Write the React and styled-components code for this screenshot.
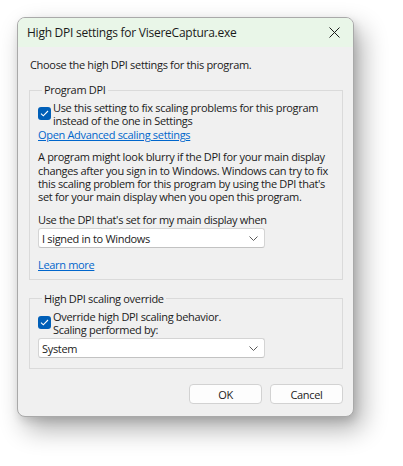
import React from 'react';
import styled, { createGlobalStyle } from 'styled-components';

const Global = createGlobalStyle`
    html, body {
        margin:0;
        padding:0;
        background:#ffffff;
    }
    body{
        font-family: "Open Sans", "Noto Sans", sans-serif;
        font-size:11px;
        letter-spacing:-0.32px;
        color:#1b1b1b;
    }
`

const Page = styled.div`
    width:403px;
    height:466px;
    padding:17px 0 0 17px;
    box-sizing:border-box;
`

const Window = styled.div`
    width:337px;
    height:400px;
    box-sizing:border-box;
    border:1px solid #a9a9a9;
    border-radius:8px;
    background:#f0f0f0;
    box-shadow: 8px 12px 26px rgba(0,0,0,0.32), 2px 4px 8px rgba(0,0,0,0.12);
    display:flex;
    flex-direction:column;
    overflow:hidden;
`

const TitleBar = styled.div`
    height:29px;
    flex:none;
    background:#e9f6e8;
    display:flex;
    align-items:center;
    justify-content:space-between;
    padding:0 10px 0 9px;
    font-size:12px;
    letter-spacing:-0.25px;
    color:#1a1a1a;
`

const Close = styled.div`
    width:12px;
    height:12px;
    display:flex;
    align-items:center;
    justify-content:center;
    margin-right:3px;
`

const Body = styled.div`
    flex:1;
    display:flex;
    flex-direction:column;
    padding:11px 10px 0 11px;
`

const Intro = styled.div`
    line-height:14px;
    padding-left:1px;
    margin-bottom:11px;
`

const Group = styled.fieldset`
    margin:0 0 ${p => p.gap || 0}px 0;
    padding:0 8px ${p => p.bottom}px 8px;
    border:1px solid #dadada;
    border-radius:0;
    display:flex;
    flex-direction:column;
    align-items:flex-start;
    min-width:0;
`

const Legend = styled.legend`
    padding:0 2px;
    margin-left:4px;
    line-height:14px;
`

const CheckRow = styled.div`
    display:flex;
    align-items:flex-start;
    margin-top:4px;
    line-height:13.4px;
    white-space:nowrap;
`

const Box = styled.span`
    width:13px;
    height:13px;
    flex:none;
    border-radius:3px;
    background:#005fb8;
    margin:6px 2px 0 0;
    display:flex;
    align-items:center;
    justify-content:center;
`

const Link = styled.a`
    color:#0066cc;
    text-decoration:underline;
    line-height:13.4px;
    margin-top:${p => p.top || 0}px;
    cursor:pointer;
`

const Para = styled.p`
    margin:${p => p.top || 0}px 0 0 0;
    line-height:13.4px;
`

const Select = styled.div`
    width:227px;
    height:20px;
    box-sizing:border-box;
    margin-top:${p => p.top}px;
    background:#ffffff;
    border:1px solid #d4d4d4;
    border-bottom-color:#c2c2c2;
    border-radius:3px;
    display:flex;
    align-items:center;
    justify-content:space-between;
    padding:0 6px 0 3px;
`

const Footer = styled.div`
    display:flex;
    justify-content:flex-end;
    gap:8px;
    margin-top:15px;
`

const Button = styled.button`
    width:73px;
    height:20px;
    box-sizing:border-box;
    background:#fdfdfd;
    border:1px solid #d2d2d2;
    border-radius:4px;
    font-family:inherit;
    font-size:11px;
    letter-spacing:inherit;
    color:#1b1b1b;
    padding:0;
`

const Chevron = () => (
    <svg width="9" height="5" viewBox="0 0 9 5">
        <path d="M0.5 0.5 L4.5 4.5 L8.5 0.5" fill="none" stroke="#5a5a5a" strokeWidth="1" />
    </svg>
)

const Check = () => (
    <svg width="9" height="7" viewBox="0 0 9 7">
        <path d="M1 3.6 L3.3 5.8 L8 1" fill="none" stroke="#ffffff" strokeWidth="1.1" />
    </svg>
)

const App = () => {
    return (
        <Page>
            <Global />
            <Window>
                <TitleBar>
                    <span>High DPI settings for VisereCaptura.exe</span>
                    <Close>
                        <svg width="11" height="11" viewBox="0 0 11 11">
                            <path d="M0.5 0.5 L10.5 10.5 M10.5 0.5 L0.5 10.5" stroke="#1a1a1a" strokeWidth="1" />
                        </svg>
                    </Close>
                </TitleBar>
                <Body>
                    <Intro>Choose the high DPI settings for this program.</Intro>
                    <Group bottom={7} gap={12}>
                        <Legend>Program DPI</Legend>
                        <CheckRow>
                            <Box><Check /></Box>
                            <span>Use this setting to fix scaling problems for this program<br />instead of the one in Settings</span>
                        </CheckRow>
                        <Link>Open Advanced scaling settings</Link>
                        <Para top={9}>
                            A program might look blurry if the DPI for your main display<br />
                            changes after you sign in to Windows. Windows can try to fix<br />
                            this scaling problem for this program by using the DPI that's<br />
                            set for your main display when you open this program.
                        </Para>
                        <Para top={9}>Use the DPI that's set for my main display when</Para>
                        <Select top={2}>
                            <span>I signed in to Windows</span>
                            <Chevron />
                        </Select>
                        <Link top={10}>Learn more</Link>
                    </Group>
                    <Group bottom={10}>
                        <Legend>High DPI scaling override</Legend>
                        <CheckRow>
                            <Box><Check /></Box>
                            <span>Override high DPI scaling behavior.<br />Scaling performed by:</span>
                        </CheckRow>
                        <Select top={2}>
                            <span>System</span>
                            <Chevron />
                        </Select>
                    </Group>
                    <Footer>
                        <Button>OK</Button>
                        <Button>Cancel</Button>
                    </Footer>
                </Body>
            </Window>
        </Page>
    )
}

export default App
